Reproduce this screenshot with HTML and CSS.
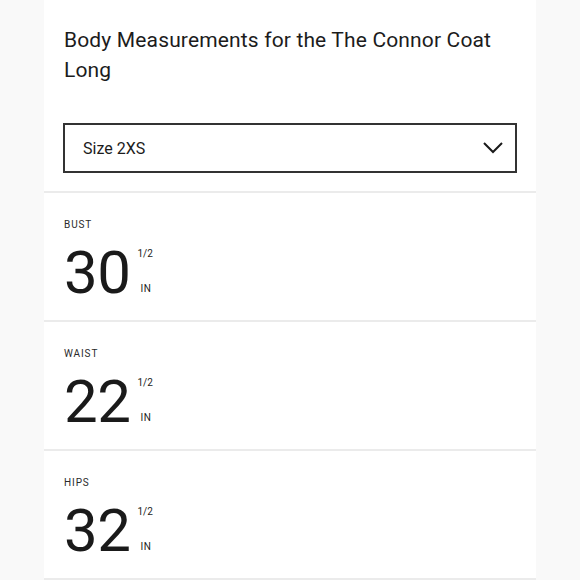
FILE: index.html
```html
<!DOCTYPE html>
<html lang="en">
<head>
<meta charset="utf-8">
<title>Body Measurements</title>
<link rel="stylesheet" href="styles.css">
</head>
<body>
<main class="panel">
  <header class="head">
    <h1 class="title">Body Measurements for the The Connor Coat Long</h1>
    <div class="select">
      <span class="select-label">Size 2XS</span>
      <svg class="chev" width="20" height="12" viewBox="0 0 20 12" aria-hidden="true"><path d="M1 1 L10 10 L19 1" fill="none" stroke="#1a1a1a" stroke-width="2"/></svg>
    </div>
  </header>
  <section class="measure">
    <div class="label">BUST</div>
    <div class="value"><span class="num">30</span><span class="side"><span class="frac">1/2</span><span class="unit">IN</span></span></div>
  </section>
  <section class="measure">
    <div class="label">WAIST</div>
    <div class="value"><span class="num">22</span><span class="side"><span class="frac">1/2</span><span class="unit">IN</span></span></div>
  </section>
  <section class="measure">
    <div class="label">HIPS</div>
    <div class="value"><span class="num">32</span><span class="side"><span class="frac">1/2</span><span class="unit">IN</span></span></div>
  </section>
</main>
</body>
</html>
```
FILE: styles.css
```css
html, body {
  margin: 0;
  padding: 0;
  background: #f9f9f9;
  font-family: Roboto, "Liberation Sans", sans-serif;
  color: #1c1c1c;
}
.panel {
  margin-left: 44px;
  width: 492px;
  background: #fff;
  min-height: 580px;
}
.head {
  padding: 25px 19px 18px 19px;
  border-bottom: 2px solid #ebebeb;
}
.title {
  margin: 0;
  font-size: 21px;
  font-weight: 400;
  line-height: 30px;
  letter-spacing: 0.15px;
  padding-left: 1px;
}
.select {
  margin-top: 38px;
  height: 46px;
  border: 2px solid #333;
  display: flex;
  align-items: center;
  justify-content: space-between;
  padding: 0 12px 0 18px;
}
.select-label {
  font-size: 16px;
}
.chev {
  display: block;
}
.measure {
  padding: 26px 20px 18px 20px;
  border-bottom: 2px solid #ebebeb;
}
.label {
  font-size: 10px;
  line-height: 12px;
  letter-spacing: 0.9px;
  color: #2a2a2a;
}
.value {
  margin-top: 13px;
  display: flex;
}
.num {
  font-size: 60px;
  line-height: 58px;
  letter-spacing: -0.5px;
  color: #1a1a1a;
}
.side {
  display: flex;
  flex-direction: column;
  justify-content: space-between;
  padding: 4px 0 7px 0;
  margin-left: 7px;
  font-size: 10px;
  line-height: 12px;
}
.unit {
  padding-left: 3px;
  letter-spacing: 0.5px;
}
```
